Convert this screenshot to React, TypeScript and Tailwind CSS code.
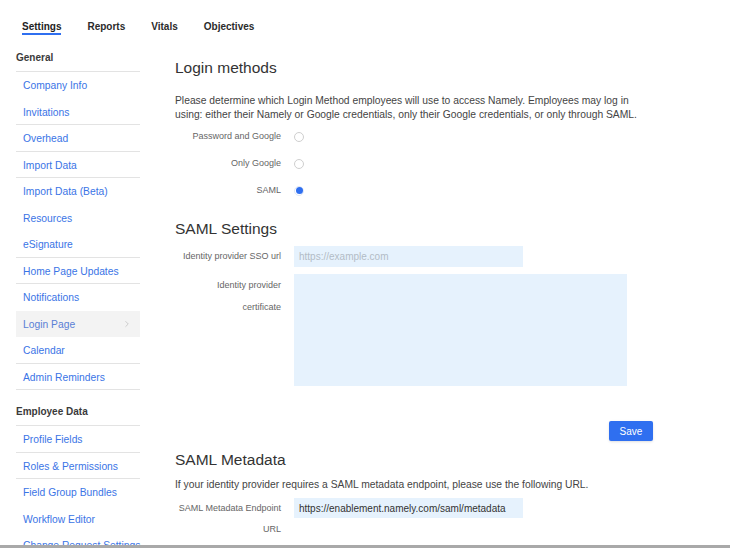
import React from 'react';
import { ChevronRight } from 'lucide-react';

type NavItem = { label: string; line?: boolean; active?: boolean };

const general: NavItem[] = [
  { label: 'Company Info' },
  { label: 'Invitations', line: true },
  { label: 'Overhead', line: true },
  { label: 'Import Data', line: true },
  { label: 'Import Data (Beta)' },
  { label: 'Resources' },
  { label: 'eSignature', line: true },
  { label: 'Home Page Updates', line: true },
  { label: 'Notifications' },
  { label: 'Login Page', active: true },
  { label: 'Calendar', line: true },
  { label: 'Admin Reminders', line: true },
];

const employeeData: NavItem[] = [
  { label: 'Profile Fields', line: true },
  { label: 'Roles & Permissions', line: true },
  { label: 'Field Group Bundles' },
  { label: 'Workflow Editor' },
  { label: 'Change Request Settings' },
];

const tabs = ['Settings', 'Reports', 'Vitals', 'Objectives'];

const SideLink: React.FC<{ item: NavItem }> = ({ item }) => (
  <div
    className={`h-[26.5px] flex items-center justify-between pl-[7px] pr-[8px] pt-[2px] border-b ${
      item.line ? 'border-[#e3e3e3]' : 'border-transparent'
    } ${item.active ? 'bg-[#f3f3f3] text-[#5a7fd6]' : 'text-[#3a74e6]'}`}
  >
    <span className="text-[10.3px] leading-[13px] whitespace-nowrap">{item.label}</span>
    {item.active && <ChevronRight className="w-[10px] h-[10px] text-[#c4c4c4]" strokeWidth={2} />}
  </div>
);

const Radio: React.FC<{ label: string; checked?: boolean }> = ({ label, checked }) => (
  <div className="h-[27px] flex items-center gap-[13px]">
    <span className="w-[106px] text-right text-[9px] text-[#666]">{label}</span>
    <span
      className={`w-[10px] h-[10px] rounded-full border flex items-center justify-center ${
        checked ? 'border-[#dfe7f7]' : 'border-[#cfcfcf]'
      }`}
    >
      {checked && <span className="w-[7px] h-[7px] rounded-full bg-[#2f6ff0]" />}
    </span>
  </div>
);

const App: React.FC = () => {
  return (
    <div className="h-[548px] w-[730px] flex flex-col overflow-hidden bg-white text-[#333] font-['Liberation_Sans',Arial,sans-serif]">
      <div className="flex-1 overflow-hidden">
        <nav className="h-[35px] flex items-end gap-[26px] pl-[22px]">
          {tabs.map((t, i) => (
            <div
              key={t}
              className={`text-[10px] font-bold leading-[13px] border-b-2 ${
                i === 0 ? 'border-[#2f6ff0] text-[#222]' : 'border-transparent text-[#2b2b2b]'
              }`}
            >
              {t}
            </div>
          ))}
        </nav>

        <div className="flex pl-[16px]">
          <aside className="w-[124px] shrink-0">
            <div className="h-[37px] flex items-end pb-[7px] border-b border-[#e3e3e3]">
              <span className="text-[10px] font-bold leading-[13px] text-[#3a3a3a]">General</span>
            </div>
            {general.map((item) => (
              <SideLink key={item.label} item={item} />
            ))}
            <div className="h-[36px] flex items-end pb-[7px] border-b border-[#e3e3e3]">
              <span className="text-[10px] font-bold leading-[13px] text-[#3a3a3a]">Employee Data</span>
            </div>
            {employeeData.map((item) => (
              <SideLink key={item.label} item={item} />
            ))}
          </aside>

          <main className="ml-[35px] w-[478px]">
            <h2 className="mt-[24px] text-[15.5px] leading-[18px] text-[#333]">Login methods</h2>
            <p className="mt-[17px] text-[10.3px] leading-[14px] text-[#444] whitespace-nowrap">
              Please determine which Login Method employees will use to access Namely. Employees may log in
              <br />
              using: either their Namely or Google credentials, only their Google credentials, or only through SAML.
            </p>
            <div className="mt-[1px]">
              <Radio label="Password and Google" />
              <Radio label="Only Google" />
              <Radio label="SAML" checked />
            </div>

            <h2 className="mt-[16px] text-[15.5px] leading-[18px] text-[#333]">SAML Settings</h2>
            <div className="mt-[8px] flex gap-[13px]">
              <label className="w-[106px] text-right text-[9px] leading-[21px] text-[#666] whitespace-nowrap">
                Identity provider SSO url
              </label>
              <div className="w-[229px] h-[21px] bg-[#e6f2fd] flex items-center pl-[5px] text-[10px] text-[#b3bcc6]">
                https://example.com
              </div>
            </div>
            <div className="mt-[7px] flex gap-[13px]">
              <label className="w-[106px] text-right text-[9px] leading-[22px] text-[#666]">
                Identity provider
                <br />
                certificate
              </label>
              <div className="w-[333px] h-[112px] bg-[#e6f2fd]" />
            </div>
            <div className="mt-[35px] flex justify-end">
              <button className="w-[44px] h-[20px] bg-[#2f6ff0] text-white text-[10px] rounded-[2px] shadow-sm">
                Save
              </button>
            </div>

            <h2 className="mt-[10px] text-[15.5px] leading-[18px] text-[#333]">SAML Metadata</h2>
            <p className="mt-[9px] text-[10.3px] leading-[14px] text-[#444] whitespace-nowrap">
              If your identity provider requires a SAML metadata endpoint, please use the following URL.
            </p>
            <div className="mt-[6px] flex gap-[13px]">
              <label className="w-[106px] text-right text-[9px] leading-[21px] text-[#666]">
                SAML Metadata Endpoint
                <br />
                URL
              </label>
              <div className="w-[229px] h-[20px] bg-[#e6f2fd] flex items-center pl-[5px] text-[10px] text-[#333] whitespace-nowrap">
                https://enablement.namely.com/saml/metadata
              </div>
            </div>
          </main>
        </div>
      </div>
      <div className="h-[3px] bg-[#a9a9a9] shrink-0" />
    </div>
  );
};

export default App;
